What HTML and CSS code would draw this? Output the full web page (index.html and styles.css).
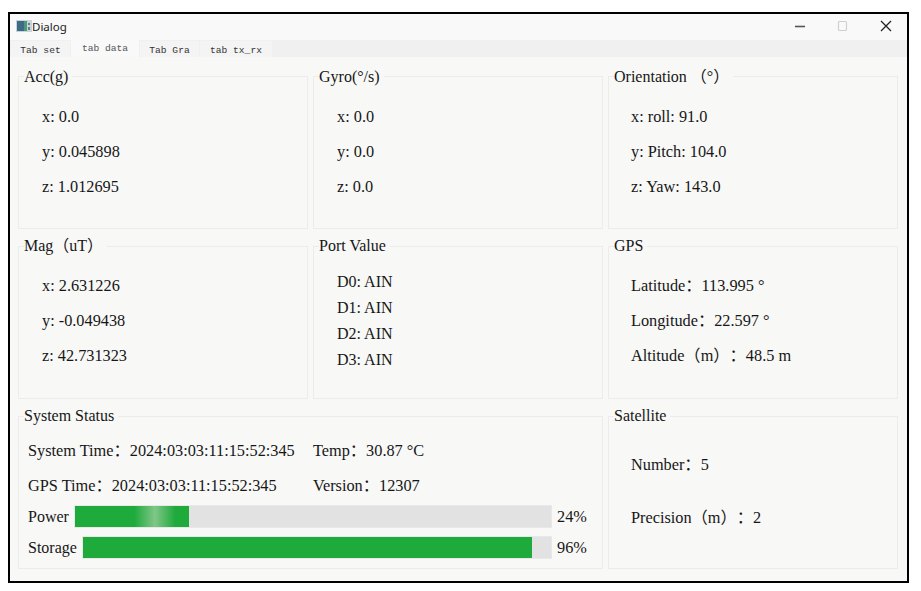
FILE: index.html
```html
<!DOCTYPE html>
<html lang="en">
<head>
<meta charset="utf-8">
<title>Dialog</title>
<link rel="stylesheet" href="styles.css">
</head>
<body>
<div class="frame">
  <header class="titlebar">
    <svg class="app-icon" width="16" height="12" viewBox="0 0 16 12">
      <rect width="16" height="12" fill="#c9d3d8"/>
      <rect x="1" y="1" width="7" height="10" fill="#3d6a86"/>
      <rect x="8" y="1" width="3" height="10" fill="#4a9a7a"/>
      <rect x="12" y="3" width="2" height="2" fill="#5f7f8f"/>
      <rect x="12" y="7" width="2" height="3" fill="#5f7f8f"/>
    </svg>
    <span class="app-title">Dialog</span>
    <div class="win-controls">
      <svg width="12" height="12" viewBox="0 0 12 12"><path d="M1 6.5h10" stroke="#555" stroke-width="1.6"/></svg>
      <svg width="12" height="12" viewBox="0 0 12 12"><rect x="1.5" y="1.5" width="8" height="9" rx="1" fill="none" stroke="#d0d0d0" stroke-width="1.2"/></svg>
      <svg width="12" height="12" viewBox="0 0 12 12"><path d="M1 1l10 10M11 1L1 11" stroke="#222" stroke-width="1.3"/></svg>
    </div>
  </header>
  <nav class="tabs">
    <span class="tab tab-first">Tab set</span>
    <span class="tab tab-active">tab data</span>
    <span class="tab tab-gra">Tab Gra</span>
    <span class="tab tab-last">tab tx_rx</span>
  </nav>
  <main class="panel">
    <section class="group group-top">
      <h2 class="group-title">Acc(g)</h2>
      <div class="rows"><p>x: 0.0</p><p>y: 0.045898</p><p>z: 1.012695</p></div>
    </section>
    <section class="group group-top">
      <h2 class="group-title">Gyro(°/s)</h2>
      <div class="rows"><p>x: 0.0</p><p>y: 0.0</p><p>z: 0.0</p></div>
    </section>
    <section class="group group-top">
      <h2 class="group-title">Orientation （°）</h2>
      <div class="rows rows-right"><p>x: roll: 91.0</p><p>y: Pitch: 104.0</p><p>z: Yaw: 143.0</p></div>
    </section>
    <section class="group">
      <h2 class="group-title">Mag（uT）</h2>
      <div class="rows"><p>x: 2.631226</p><p>y: -0.049438</p><p>z: 42.731323</p></div>
    </section>
    <section class="group">
      <h2 class="group-title">Port Value</h2>
      <div class="rows rows-port"><p>D0: AIN</p><p>D1: AIN</p><p>D2: AIN</p><p>D3: AIN</p></div>
    </section>
    <section class="group">
      <h2 class="group-title">GPS</h2>
      <div class="rows rows-right"><p>Latitude：113.995 °</p><p>Longitude：22.597 °</p><p>Altitude（m）：48.5 m</p></div>
    </section>
    <section class="group group-wide">
      <h2 class="group-title">System Status</h2>
      <div class="status">
        <p>System Time：2024:03:03:11:15:52:345</p><p>Temp：30.87 °C</p>
        <p>GPS Time：2024:03:03:11:15:52:345</p><p>Version：12307</p>
      </div>
      <div class="meter">
        <span>Power</span>
        <div class="bar"><div class="fill fill-shine" style="width:24%"></div></div>
        <span class="pct">24%</span>
      </div>
      <div class="meter">
        <span>Storage</span>
        <div class="bar"><div class="fill" style="width:96%"></div></div>
        <span class="pct">96%</span>
      </div>
    </section>
    <section class="group">
      <h2 class="group-title">Satellite</h2>
      <div class="rows rows-right rows-sat"><p>Number：5</p><p>Precision（m）：2</p></div>
    </section>
  </main>
</div>
</body>
</html>
```
FILE: styles.css
```css
* { box-sizing: border-box; }
html, body { margin: 0; background: #fff; }
body {
  padding: 12px 12px 8px 8px;
  font-family: "Liberation Serif", "Noto Sans CJK SC", serif;
  font-size: 16.3px;
  color: #161616;
  text-spacing-trim: space-all;
}
p { margin: 0; }
.frame {
  width: 901px;
  height: 571px;
  border: 2px solid #000;
  background: #f8f8f7;
  display: flex;
  flex-direction: column;
}
.titlebar {
  height: 26px;
  display: flex;
  align-items: center;
  padding: 0 0 2px 6px;
  background: #f9f9f9;
  flex: none;
}
.app-icon { flex: none; }
.app-title {
  font-family: "Noto Sans", sans-serif;
  font-size: 11.5px;
  color: #222;
}
.win-controls {
  margin-left: auto;
  margin-right: 15px;
  display: flex;
  gap: 31px;
  align-items: center;
}
.tabs {
  height: 17px;
  background: #f0f0f0;
  display: flex;
  align-items: flex-end;
  padding-left: 1px;
  flex: none;
  font-family: "Liberation Mono", monospace;
  font-size: 9.6px;
  color: #333;
}
.tab {
  height: 16px;
  line-height: 19px;
  text-align: center;
  background: #f4f4f4;
  margin-right: 1px;
}
.tab-first { width: 59px; }
.tab-active { width: 68px; height: 17px; line-height: 18px; background: #f9f9f9; color: #555; }
.tab-gra { width: 59px; }
.tab-last { width: 72px; }
.panel {
  flex: 1;
  padding: 19px 9px 12px 8px;
  display: grid;
  grid-template-columns: repeat(3, 290px);
  grid-template-rows: repeat(3, 153px);
  column-gap: 5px;
  row-gap: 17px;
}
.group {
  border: 1px solid #ececea;
  padding-left: 5px;
  min-width: 0;
}
.group-wide { grid-column: span 2; }
.group-title {
  margin: -11px 0 0;
  width: fit-content;
  padding-right: 4px;
  background: #f8f8f7;
  font-size: 16px;
  line-height: 20px;
  font-weight: normal;
}
.group-top .group-title { margin-top: -10px; }
.rows {
  padding: 20px 0 0 18px;
  display: flex;
  flex-direction: column;
  gap: 15px;
}
.rows p { line-height: 20px; }
.rows-right { padding-left: 17px; }
.rows-port { padding-top: 16px; gap: 6px; font-size: 16px; }
.rows-sat { padding-top: 29px; gap: 33px; }
.status {
  padding: 15px 0 0 4px;
  display: grid;
  grid-template-columns: 285px auto;
  row-gap: 15px;
  line-height: 20px;
}
.meter {
  display: flex;
  align-items: center;
  height: 23px;
  padding-left: 4px;
  gap: 5px;
  margin-top: 8px;
  font-size: 16px;
}
.status + .meter { margin-top: 9px; }
.bar {
  flex: 1;
  height: 23px;
  background: #e2e2e2;
  border: 1px solid #e8e8e8;
}
.fill {
  height: 100%;
  background: #1faa3c;
}
.fill-shine {
  background: linear-gradient(90deg, #1faa3c 0%, #1faa3c 52%, #80c688 70%, #1faa3c 88%, #1faa3c 100%);
}
.pct { width: 45px; flex: none; font-size: 16.3px; }
```
